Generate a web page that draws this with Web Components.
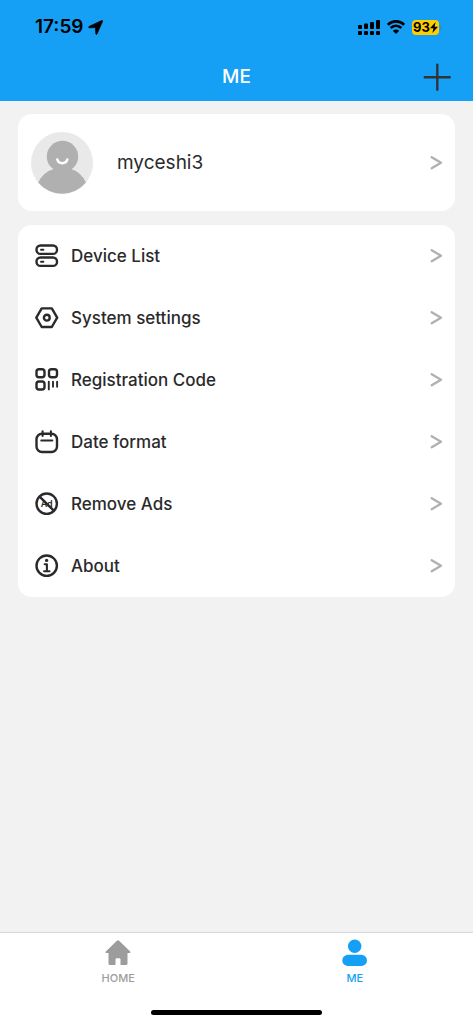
<!DOCTYPE html>
<html lang="en">
<head>
<meta charset="utf-8">
<meta name="viewport" content="width=device-width, initial-scale=1">
<title>ME</title>
<style>
  html, body { margin: 0; height: 100%; }
  body { font-family: Inter, "Liberation Sans", sans-serif; color: #2a2a2c; background: #f2f2f2; }
</style>
</head>
<body>
<me-app></me-app>
<script>
const define = (name, html) => {
  const template = document.createElement('template');
  template.innerHTML = html;
  customElements.define(name, class extends HTMLElement {
    constructor() {
      super();
      this.attachShadow({ mode: 'open' }).append(template.content.cloneNode(true));
    }
  });
};

define('status-bar', `
<style>
  :host { display: flex; align-items: center; justify-content: space-between; height: 54px; padding: 0 31px 0 35px; color: #000; }
  div { display: flex; align-items: center; }
  .time { gap: 4px; font-size: 19px; line-height: 24px; font-weight: 600; }
  .state { gap: 7px; }
  .battery { gap: 1px; }
  .level { display: flex; align-items: center; justify-content: center; width: 27px; height: 15px; border-radius: 4px; background: #fc0; font-size: 13px; line-height: 15px; font-weight: 700; }
  svg { display: block; }
</style>
<div class="time"><span>17:59</span>
  <svg width="15" height="15" viewBox="0 0 15 15" aria-hidden="true"><path d="M1 6.500 13.600.6q1.300-.4.900.9L9 14q-.7 1-1.200 0L7.500 8.200q0-.6-.6-.6L1 7.800q-1.100-.5 0-1.300Z" stroke="#000" stroke-width=".7" stroke-linejoin="round"/></svg>
</div>
<div class="state">
  <svg width="22" height="16" viewBox="0 0 22 16" aria-hidden="true"><rect x="0" y="6" width="4" height="4" rx="1"/><rect x="6" y="4.500" width="4" height="5.500" rx="1"/><rect x="12" y="3" width="4" height="7" rx="1"/><rect x="18" y="1" width="4" height="9" rx="1"/><g><rect y="12" width="4" height="4" rx="1"/><rect x="6" y="12" width="4" height="4" rx="1"/><rect x="12" y="12" width="4" height="4" rx="1"/><rect x="18" y="12" width="4" height="4" rx="1"/></g></svg>
  <svg width="18" height="14" viewBox="0 0 18 14" aria-hidden="true"><g fill="none" stroke="#000" stroke-width="2.600"><path d="M.8 4.700a11.700 11.700 0 0 1 16.400 0"/><path d="M3.700 8a7.500 7.500 0 0 1 10.600 0"/></g><path d="M9 14 5.800 10.800q3.200-2.600 6.400 0Z"/></svg>
  <div class="battery"><span class="level">93<svg width="8" height="11" viewBox="0 0 8 11" aria-hidden="true"><path d="M5.600 0 0 6.200h3.400L2.400 11 8 4.700H4.600Z"/></svg></span>
  <svg width="2" height="5" viewBox="0 0 2 5" aria-hidden="true"><path d="M0 0q2 1 2 2.500T0 5Z" fill="#3b86c4"/></svg></div>
</div>`);

define('title-bar', `
<style>
  :host { display: grid; grid-template-columns: 1fr auto 1fr; align-items: center; height: 45px; padding: 0 22px 2px; color: #fff; }
  h1 { grid-column: 2; margin: 0; font-size: 19px; line-height: 24px; font-weight: 500; }
  button { justify-self: end; padding: 0; border: 0; background: none; color: #2f3438; }
  svg { display: block; }
</style>
<h1><slot></slot></h1>
<button type="button" aria-label="Add"><svg width="28" height="28" viewBox="0 0 28 28" fill="none" stroke="currentColor" stroke-width="2.400" stroke-linecap="round"><path d="M14.300 1.800v25M1.800 14.300h25"/></svg></button>`);

define('chevron-icon', `
<style>:host { display: block; color: #b0b0b0; } svg { display: block; }</style>
<svg width="13" height="14" viewBox="0 0 13 14" fill="none" stroke="currentColor" stroke-width="2.300" stroke-linecap="round" stroke-linejoin="round" aria-hidden="true"><path d="M1.700 1.200 11 6.700 1.700 12.200"/></svg>`);

define('list-card', `
<style>:host { display: block; border-radius: 14px; background: #fff; }</style>
<slot></slot>`);

define('profile-row', `
<style>
  :host { display: block; }
  a { display: flex; align-items: center; gap: 24px; height: 97px; padding: 0 12px 0 13px; color: inherit; text-decoration: none; font-size: 19px; line-height: 24px; }
  span { flex: 1; }
  svg { display: block; }
</style>
<a href="#profile">
  <svg width="62" height="62" viewBox="0 0 62 62" aria-hidden="true"><circle cx="31" cy="31" r="31" fill="#e9e9e9"/><circle cx="31.500" cy="24.500" r="15.700" fill="#b0b0b0"/><path d="M7.200 50.500Q12 40 24 36.500H39Q50 40 54.900 50.500A31 31 0 0 1 7.200 50.500Z" fill="#b0b0b0"/><path d="M26.300 27.500q1 3.700 5 3.700t5-3.700" fill="none" stroke="#fff" stroke-width="2.600" stroke-linecap="round"/></svg>
  <span><slot></slot></span><chevron-icon></chevron-icon>
</a>`);

define('menu-row', `
<style>
  :host { display: block; }
  a { display: flex; align-items: center; gap: 12px; height: 62px; padding: 0 12px 0 17px; color: inherit; text-decoration: none; font-size: 17px; line-height: 24px; font-weight: 500; }
  span { flex: 1; }
</style>
<a href="#"><slot name="icon"></slot><span><slot></slot></span><chevron-icon></chevron-icon></a>`);

const icon = (name, art) => define(name, `
<style>:host { display: block; } svg { display: block; }</style>
<svg width="24" height="24" viewBox="0 0 24 24" fill="none" stroke="currentColor" stroke-width="2.400" stroke-linecap="round" stroke-linejoin="round" aria-hidden="true">${art}</svg>`);

icon('icon-devices', `<rect x="1.500" y="1.500" width="20.500" height="8.400" rx="4"/><rect x="1.500" y="13.500" width="20.500" height="8.400" rx="4"/><path d="M6 5.700h2.400M6 17.700h2.400" stroke-width="1.900"/>`);
icon('icon-settings', `<path d="M6.700 2.400h10.100L22.200 11.700l-5.400 9.300H6.700L1.300 11.700Z"/><circle cx="11.800" cy="11.700" r="2.900"/>`);
icon('icon-code', `<rect x="1.500" y="1.300" width="8" height="8" rx="2.500"/><rect x="14" y="1.300" width="8" height="8" rx="2.500"/><rect x="1.500" y="13.500" width="8" height="8" rx="2.500"/><path d="M13.800 13.800v7.600M18 13.800v5M22.100 13.800v5" stroke-width="1.900"/>`);
icon('icon-calendar', `<rect x="1.500" y="3.800" width="20.500" height="18.200" rx="5.500"/><path d="M7.600 1.300v4.600M15.900 1.300v4.600M6.300 10.500h11" stroke-width="2.100"/>`);
icon('icon-no-ads', `<circle cx="11.700" cy="11.700" r="10.200"/><text x="11.700" y="15" text-anchor="middle" font-size="9" font-weight="600" fill="currentColor" stroke="none">Ad</text><path d="m4.600 4.700 14.200 14"/>`);
icon('icon-about', `<circle cx="11.700" cy="11.700" r="10.200"/><circle cx="11.600" cy="6.400" r="1.600" fill="currentColor" stroke="none"/><path d="M9.700 10.200h2.200v7M9.100 17.200h5.400" stroke-width="2.100"/>`);

define('tab-item', `
<style>
  :host { display: block; flex: 1; color: #9c9c9c; }
  :host([active]) { color: #159ff5; }
  a { display: flex; flex-direction: column; align-items: center; gap: 4px; padding-top: 6px; color: inherit; text-decoration: none; font-size: 11px; line-height: 14px; font-weight: 500; }
</style>
<a href="#"><slot name="icon"></slot><span><slot></slot></span></a>`);

define('tab-bar', `
<style>
  :host { display: block; height: 91px; border-top: 1px solid #d8d8d8; background: #fff; }
  nav { display: flex; height: 77px; }
  .indicator { width: 36%; height: 5px; margin: 0 auto; border-radius: 3px; background: #000; }
</style>
<nav><slot></slot></nav><div class="indicator"></div>`);

define('me-app', `
<style>
  :host { display: flex; flex-direction: column; min-height: 100%; }
  header { background: #159ff5; }
  main { flex: 1; display: flex; flex-direction: column; gap: 14px; padding: 13px 18px; }
  tab-item svg { display: block; }
</style>
<header><status-bar></status-bar><title-bar>ME</title-bar></header>
<main>
  <list-card><profile-row>myceshi3</profile-row></list-card>
  <list-card>
    <menu-row><icon-devices slot="icon"></icon-devices>Device List</menu-row>
    <menu-row><icon-settings slot="icon"></icon-settings>System settings</menu-row>
    <menu-row><icon-code slot="icon"></icon-code>Registration Code</menu-row>
    <menu-row><icon-calendar slot="icon"></icon-calendar>Date format</menu-row>
    <menu-row><icon-no-ads slot="icon"></icon-no-ads>Remove Ads</menu-row>
    <menu-row><icon-about slot="icon"></icon-about>About</menu-row>
  </list-card>
</main>
<tab-bar>
  <tab-item><svg slot="icon" width="28" height="28" viewBox="0 0 28 28" fill="currentColor" aria-hidden="true"><path d="M12.900 1.800q1.100-.9 2.200 0L26.200 12.500q1 1.300-.5 1.500H23.500V24.500q0 1.600-1.600 1.600H16.500V20.500q0-1.300-1.300-1.300h-2.400Q11.500 19.200 11.500 20.500v5.600H6.100Q4.500 26.100 4.500 24.500V14H2.300q-1.500-.2-.5-1.500Z"/></svg>HOME</tab-item>
  <tab-item active><svg slot="icon" width="28" height="28" viewBox="0 0 28 28" fill="currentColor" aria-hidden="true"><circle cx="13.700" cy="7.300" r="6.700"/><rect x="1.300" y="15.800" width="24.700" height="11.200" rx="5.600"/></svg>ME</tab-item>
</tab-bar>`);
</script>
</body>
</html>
